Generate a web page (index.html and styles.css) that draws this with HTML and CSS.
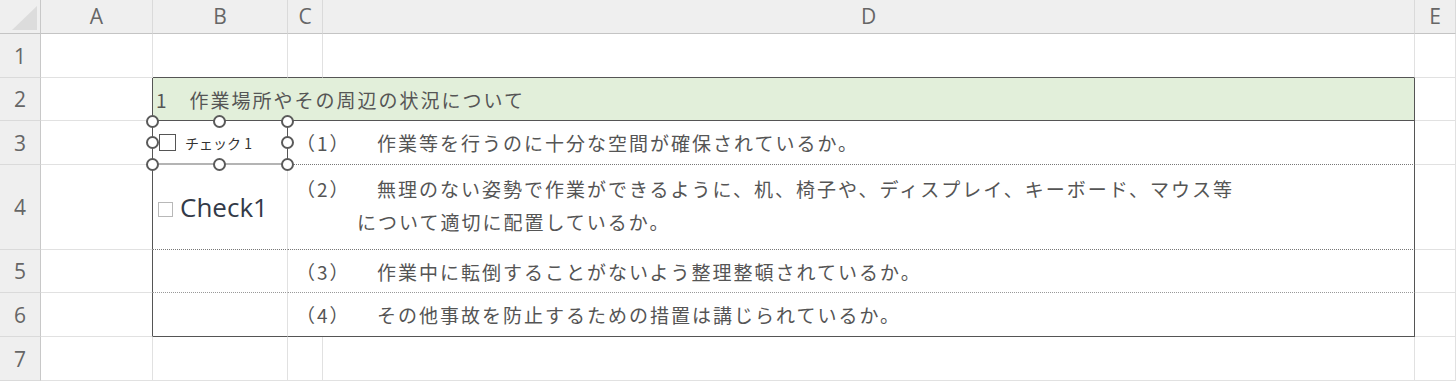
FILE: index.html
```html
<!DOCTYPE html>
<html lang="ja">
<head>
  <meta charset="UTF-8">
  <title>チェックリスト - Sheet1</title>
  <link rel="stylesheet" href="styles.css">
</head>
<body>
  <div class="sheet">
    <!-- column headers -->
    <div class="corner">
      <svg width="41" height="34" viewBox="0 0 41 34"><polygon points="37,6 37,30 12,30" fill="#dcdcdc"/></svg>
    </div>
    <div class="colhead">A</div>
    <div class="colhead">B</div>
    <div class="colhead">C</div>
    <div class="colhead">D</div>
    <div class="colhead">E</div>

    <!-- row 1 -->
    <div class="rowhead">1</div>
    <div class="cell"></div>
    <div class="cell edge-below"></div>
    <div class="cell edge-below"></div>
    <div class="cell edge-below"></div>
    <div class="cell"></div>

    <!-- row 2 -->
    <div class="rowhead">2</div>
    <div class="cell edge-right"></div>
    <div class="cell section">1　作業場所やその周辺の状況について</div>
    <div class="cell"></div>

    <!-- row 3 -->
    <div class="rowhead">3</div>
    <div class="cell edge-right"></div>
    <div class="cell ctrl-cell">
      <div class="form-check">
        <span class="box"></span>
        <span class="form-label">チェック 1</span>
      </div>
      <span class="h h-tl"></span><span class="h h-tm"></span><span class="h h-tr"></span>
      <span class="h h-ml"></span><span class="h h-mr"></span>
      <span class="h h-bl"></span><span class="h h-bm"></span><span class="h h-br"></span>
    </div>
    <div class="cell item dotted">
      <div><span class="num">（1）</span>作業等を行うのに十分な空間が確保されているか。</div>
    </div>
    <div class="cell"></div>

    <!-- row 4 -->
    <div class="rowhead">4</div>
    <div class="cell edge-right"></div>
    <div class="cell side dotted">
      <span class="small-box"></span>
      <span class="check-label">Check1</span>
    </div>
    <div class="cell item item-tall dotted">
      <div><span class="num">（2）</span>無理のない姿勢で作業ができるように、机、椅子や、ディスプレイ、キーボード、マウス等</div>
      <div class="cont">について適切に配置しているか。</div>
    </div>
    <div class="cell"></div>

    <!-- row 5 -->
    <div class="rowhead">5</div>
    <div class="cell edge-right"></div>
    <div class="cell side dotted light-dots"></div>
    <div class="cell item dotted light-dots">
      <div><span class="num">（3）</span>作業中に転倒することがないよう整理整頓されているか。</div>
    </div>
    <div class="cell"></div>

    <!-- row 6 -->
    <div class="rowhead">6</div>
    <div class="cell edge-right"></div>
    <div class="cell side last"></div>
    <div class="cell item last">
      <div><span class="num">（4）</span>その他事故を防止するための措置は講じられているか。</div>
    </div>
    <div class="cell"></div>

    <!-- row 7 -->
    <div class="rowhead">7</div>
    <div class="cell"></div>
    <div class="cell"></div>
    <div class="cell"></div>
    <div class="cell"></div>
    <div class="cell"></div>
  </div>
</body>
</html>
```

FILE: styles.css
```css
* {
  box-sizing: border-box;
}
body {
  margin: 0;
  background: #fff;
  font-family: "Noto Sans CJK JP", "Noto Sans", sans-serif;
  overflow: hidden;
}
.sheet {
  display: grid;
  grid-template-columns: 41px 112px 135px 35px 1092px 41px;
  grid-template-rows: 34px 44px 43px 44px 85px 43px 44px 44px;
  width: 1456px;
  height: 381px;
}
.corner {
  background: #efefef;
  border-bottom: 1px solid #c4c4c4;
  border-right: 1px solid #c8c8c8;
}
.corner svg {
  display: block;
}
.colhead {
  background: #efefef;
  border-bottom: 1px solid #c4c4c4;
  border-right: 1px solid #dadada;
  display: flex;
  align-items: center;
  justify-content: center;
  font-family: "Open Sans", "Noto Sans", sans-serif;
  font-size: 21px;
  color: #666;
  padding-bottom: 2px;
}
.rowhead {
  background: #efefef;
  border-right: 1px solid #c8c8c8;
  border-bottom: 1px solid #dadada;
  display: flex;
  align-items: center;
  justify-content: center;
  font-family: "Open Sans", "Noto Sans", sans-serif;
  font-size: 21px;
  color: #666;
}
.cell {
  border-right: 1px solid #e1e1e1;
  border-bottom: 1px solid #e1e1e1;
}
.edge-below {
  border-bottom-color: #555;
}
.edge-right {
  border-right-color: #555;
}

/* table body */
.section {
  grid-column: 3 / 6;
  background: #e2efda;
  border-right: 1px solid #555;
  border-bottom: 1px solid #555;
  display: flex;
  align-items: center;
  padding-left: 3px;
  font-size: 19px;
  letter-spacing: 2px;
  color: #555;
}
.item {
  grid-column: 4 / 6;
  border-right: 1px solid #555;
  display: flex;
  flex-direction: column;
  justify-content: center;
  padding-left: 8px;
  font-size: 19px;
  letter-spacing: 2px;
  color: #555;
  white-space: nowrap;
}
.item-tall {
  line-height: 33px;
  padding-bottom: 4px;
}
.num {
  display: inline-block;
  width: 81px;
}
.cont {
  padding-left: 61px;
}
.dotted {
  border-bottom: 1px dotted #777;
}
.light-dots {
  border-bottom-color: #999;
}
.last {
  border-bottom: 1px solid #555;
}
.side {
  display: flex;
  align-items: center;
  padding-left: 5px;
}

/* form control (selected) */
.ctrl-cell {
  position: relative;
  border-right: 1px solid #555;
  border-bottom: 2px solid #b4b4b4;
  display: flex;
  align-items: center;
  padding-left: 6px;
}
.form-check {
  display: flex;
  align-items: center;
  gap: 9px;
  padding-top: 1px;
}
.box {
  width: 17px;
  height: 17px;
  border: 1px solid #555;
  background: #fff;
}
.form-label {
  font-size: 14px;
  color: #333;
}
.h {
  position: absolute;
  width: 13px;
  height: 13px;
  border: 2.5px solid #5a5a5a;
  border-radius: 50%;
  background: #fff;
}
.h-tl, .h-tm, .h-tr { top: -6px; }
.h-ml, .h-mr { top: 15px; }
.h-bl, .h-bm, .h-br { bottom: -8px; }
.h-tl, .h-ml, .h-bl { left: -7px; }
.h-tm, .h-bm { left: 60px; }
.h-tr, .h-mr, .h-br { right: -7px; }

/* Check1 control */
.small-box {
  width: 15px;
  height: 15px;
  border: 1px solid #b8b8b8;
  background: #fff;
  margin-right: 7px;
  margin-top: 4px;
}
.check-label {
  font-family: "Open Sans", "Noto Sans", sans-serif;
  font-size: 26px;
  color: #333a48;
}
```
